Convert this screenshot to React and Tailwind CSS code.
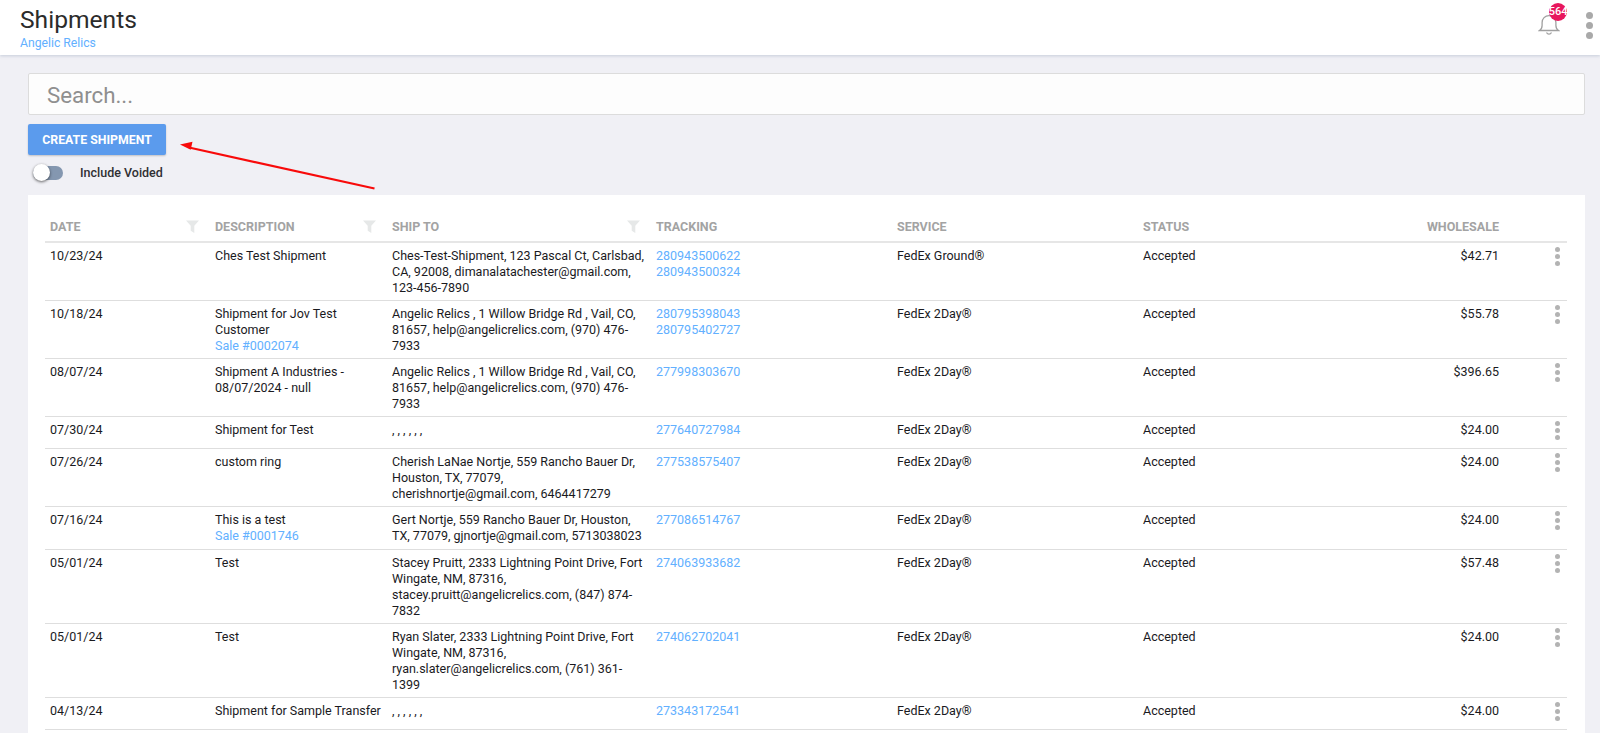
import React from "react";

const rows = [
  { d: "10/23/24", desc: "Ches Test Shipment", to: "Ches-Test-Shipment, 123 Pascal Ct, Carlsbad, CA, 92008, dimanalatachester@gmail.com, 123-456-7890", t: ["280943500622", "280943500324"], s: "FedEx Ground®", w: "$42.71" },
  { d: "10/18/24", desc: "Shipment for Jov Test Customer", sale: "Sale #0002074", to: "Angelic Relics , 1 Willow Bridge Rd , Vail, CO, 81657, help@angelicrelics.com, (970) 476-7933", t: ["280795398043", "280795402727"], s: "FedEx 2Day®", w: "$55.78" },
  { d: "08/07/24", desc: "Shipment A Industries - 08/07/2024 - null", to: "Angelic Relics , 1 Willow Bridge Rd , Vail, CO, 81657, help@angelicrelics.com, (970) 476-7933", t: ["277998303670"], s: "FedEx 2Day®", w: "$396.65" },
  { d: "07/30/24", desc: "Shipment for Test", to: ", , , , , ,", t: ["277640727984"], s: "FedEx 2Day®", w: "$24.00" },
  { d: "07/26/24", desc: "custom ring", to: "Cherish LaNae Nortje, 559 Rancho Bauer Dr, Houston, TX, 77079, cherishnortje@gmail.com, 6464417279", t: ["277538575407"], s: "FedEx 2Day®", w: "$24.00" },
  { d: "07/16/24", desc: "This is a test", sale: "Sale #0001746", to: "Gert Nortje, 559 Rancho Bauer Dr, Houston, TX, 77079, gjnortje@gmail.com, 5713038023", t: ["277086514767"], s: "FedEx 2Day®", w: "$24.00", tall: true },
  { d: "05/01/24", desc: "Test", to: "Stacey Pruitt, 2333 Lightning Point Drive, Fort Wingate, NM, 87316, stacey.pruitt@angelicrelics.com, (847) 874-7832", t: ["274063933682"], s: "FedEx 2Day®", w: "$57.48" },
  { d: "05/01/24", desc: "Test", to: "Ryan Slater, 2333 Lightning Point Drive, Fort Wingate, NM, 87316, ryan.slater@angelicrelics.com, (761) 361-1399", t: ["274062702041"], s: "FedEx 2Day®", w: "$24.00" },
  { d: "04/13/24", desc: "Shipment for Sample Transfer", to: ", , , , , ,", t: ["273343172541"], s: "FedEx 2Day®", w: "$24.00" },
];

function Funnel() {
  return (
    <svg width="13" height="13" viewBox="0 0 13 13" className="block">
      <path d="M0 0.500h13L8.300 5.800V13L4.700 10.800V5.800z" fill="#e6e8e8" />
    </svg>
  );
}

function Kebab({ big }) {
  const cls = big ? "w-[7px] h-[7px] rounded-full bg-[#a9a9a9]" : "w-[5px] h-[5px] rounded-full bg-[#b3b3b3]";
  return (
    <div className={big ? "flex flex-col items-center gap-[3px]" : "flex flex-col items-center gap-[2px]"}>
      <span className={cls} />
      <span className={cls} />
      <span className={cls} />
    </div>
  );
}

function Th({ children, filter, right }) {
  return (
    <th className={`pl-[5px] ${filter ? "pr-[11px]" : "pr-[4px]"} h-[47px] pt-[17px] align-middle font-bold text-[12.5px] text-[#a3a3a3] uppercase ${right ? "text-right" : "text-left"}`}>
      <div className={`flex items-center ${right ? "justify-end" : "justify-between"}`}>
        <span>{children}</span>
        {filter && <Funnel />}
      </div>
    </th>
  );
}

const cell = "pt-[5px] pb-[4px] pl-[5px] pr-[4px]";

export default function App() {
  return (
    <div className="relative h-[733px] overflow-hidden bg-[#f0f0f5] text-[12.5px] leading-4 text-[#1a1a1e] font-['Roboto',sans-serif]">
      <header className="h-[55px] bg-white shadow-[0_1px_3px_rgba(120,140,170,0.35)] flex items-start justify-between pl-[20px] pr-[7px]">
        <div>
          <h1 className="text-[24.6px] leading-[28px] pt-[6px] font-normal text-[#2b2b2b]">Shipments</h1>
          <div className="text-[12.2px] leading-[16px] mt-[1px] text-[#62b0ff]">Angelic Relics</div>
        </div>
        <div className="flex items-start">
          <div className="relative mt-[14px] mr-[26px]">
            <svg width="22" height="22" viewBox="0 0 22 22" fill="none" stroke="#a0a0a0" strokeWidth="1.3" className="block">
              <path d="M1.500 16.500c1.600-1 2.600-2.600 2.600-5V8.500C4.100 4.800 7 1.600 11 1.600s6.900 3.200 6.900 6.900v3c0 2.400 1 4 2.600 5z" />
              <path d="M8.500 18.500c.6 1.200 1.400 1.700 2.500 1.700s1.900-.5 2.500-1.700" />
            </svg>
            <span className="absolute left-[11px] -top-[11px] w-[18px] h-[18px] rounded-full bg-[#e8175d] text-white text-[11px] leading-[18px] font-medium text-center flex justify-center whitespace-nowrap">564</span>
          </div>
          <div className="mt-[12px]">
            <Kebab big />
          </div>
        </div>
      </header>

      <main className="pl-[28px] pr-[15px] pt-[18px]">
        <div className="h-[42px] border border-[#dcdcdc] rounded-[2px] bg-[#fdfdfd] pl-[18px] pt-[2px] flex items-center text-[22.3px] text-[#8f8f8f]">
          Search...
        </div>
        <button className="block mt-[9px] w-[138px] h-[31px] rounded-[2px] bg-[#5b9bed] text-white text-[12.3px] font-bold uppercase shadow-[0_1px_2px_rgba(0,0,0,0.2)]">
          Create Shipment
        </button>
        <div className="flex items-center mt-[8px] h-[20px] pl-[5px]">
          <div className="relative w-[30px] h-[14px] rounded-full bg-[#8497b0]">
            <span className="absolute left-0 -top-[2px] w-[17px] h-[17px] rounded-full bg-white shadow-[0_1px_3px_rgba(0,0,0,0.6)]" />
          </div>
          <span className="ml-[17px] font-medium text-[#2f2f33]">Include Voided</span>
        </div>
        <section className="mt-[12px] bg-white pl-[17px] pr-[18px] pb-4">
          <table className="w-full table-fixed border-collapse">
            <colgroup>
              <col className="w-[165px]" />
              <col className="w-[177px]" />
              <col className="w-[264px]" />
              <col className="w-[241px]" />
              <col className="w-[246px]" />
              <col className="w-[205px]" />
              <col className="w-[160px]" />
              <col />
            </colgroup>
            <thead>
              <tr className="border-b-2 border-[#e6e6e6]">
                <Th filter>Date</Th>
                <Th filter>Description</Th>
                <Th filter>Ship To</Th>
                <Th>Tracking</Th>
                <Th>Service</Th>
                <Th>Status</Th>
                <Th right>Wholesale</Th>
                <th />
              </tr>
            </thead>
            <tbody>
              {rows.map((r, i) => (
                <tr key={i} className={r.tall ? "h-[43px] border-b border-[#dedede] align-top" : "border-b border-[#dedede] align-top"}>
                  <td className={cell}>{r.d}</td>
                  <td className={cell}>
                    <div>{r.desc}</div>
                    {r.sale && <div className="text-[#62b0ff]">{r.sale}</div>}
                  </td>
                  <td className={cell}>{r.to}</td>
                  <td className={`${cell} text-[#62b0ff]`}>
                    {r.t.map((x) => (
                      <div key={x}>{x}</div>
                    ))}
                  </td>
                  <td className={cell}>{r.s}</td>
                  <td className={cell}>Accepted</td>
                  <td className={`${cell} text-right`}>{r.w}</td>
                  <td className="pt-[4px] pb-[8px]">
                    <div className="flex justify-end pr-[7px]"><Kebab /></div>
                  </td>
                </tr>
              ))}
            </tbody>
          </table>
        </section>
      </main>

      <svg className="absolute left-0 top-0 pointer-events-none" width="400" height="200" viewBox="0 0 400 200">
        <path d="M374.500 188.500L189 147.500" stroke="#f80a0a" strokeWidth="2.300" fill="none" />
        <path d="M180 144.500l12.500-2.800-1.800 8z" fill="#f80a0a" />
      </svg>
    </div>
  );
}
